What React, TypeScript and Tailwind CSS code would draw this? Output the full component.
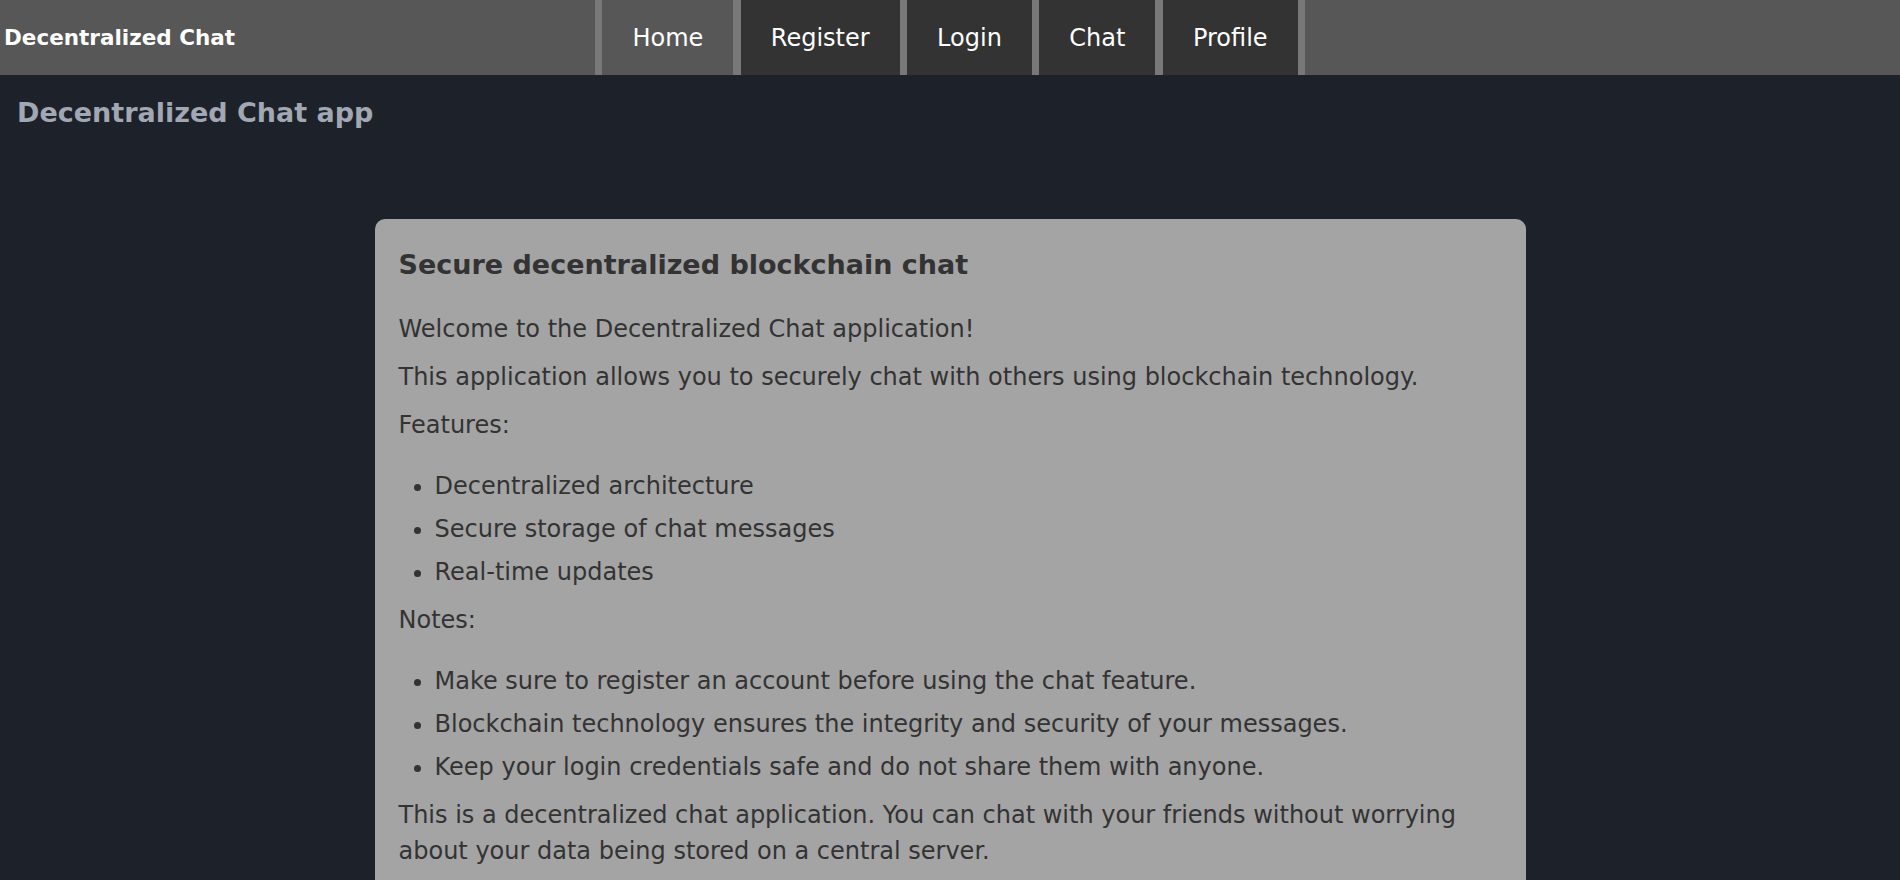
const navItems = ['Home', 'Register', 'Login', 'Chat', 'Profile']

const features = ['Decentralized architecture', 'Secure storage of chat messages', 'Real-time updates']

const notes = [
	'Make sure to register an account before using the chat feature.',
	'Blockchain technology ensures the integrity and security of your messages.',
	'Keep your login credentials safe and do not share them with anyone.',
]

function NavBar() {
	return (
		<nav className="grid h-[75px] grid-cols-[1fr_auto_1fr] bg-[#575757]">
			<div className="flex items-center pt-[2px] pl-[4px] text-[21.5px] font-bold text-white">Decentralized Chat</div>
			<ul className="flex h-full gap-[7.5px] bg-[#787878] px-[7.5px]">
				{navItems.map((item, idx) => (
					<li
						key={item}
						className={`flex h-full items-center px-[30px] pt-[1px] text-[24px] text-white ${
							idx === 0 ? 'bg-[#575757]' : 'bg-[#333333]'
						}`}
					>
						{item}
					</li>
				))}
			</ul>
			<div />
		</nav>
	)
}

function BulletList({ items }: { items: string[] }) {
	return (
		<ul className="mt-[25px] list-disc pl-[36px]">
			{items.map((text, idx) => (
				<li key={text} className={idx === 0 ? '' : 'mt-[7px]'}>
					{text}
				</li>
			))}
		</ul>
	)
}

export default function App() {
	return (
		<div className="min-h-screen bg-[#1d2129] font-['DejaVu_Sans',sans-serif]">
			<NavBar />
			<h2 className="mt-[17.5px] px-[17px] text-[27px] leading-[40.5px] font-bold text-[#a1a7b3]">
				Decentralized Chat app
			</h2>
			<div className="mx-auto mt-[85.5px] w-[1151px] rounded-[10px] bg-[#a4a4a4] px-[24px] pt-[26.5px] pb-[24px] text-[24px] leading-[36px] text-[#333333]">
				<h3 className="text-[27px] leading-[40.5px] font-bold">Secure decentralized blockchain chat</h3>
				<p className="mt-[25px]">Welcome to the Decentralized Chat application!</p>
				<p className="mt-[12px]">
					This application allows you to securely chat with others using blockchain technology.
				</p>
				<p className="mt-[12px]">Features:</p>
				<BulletList items={features} />
				<p className="mt-[12px]">Notes:</p>
				<BulletList items={notes} />
				<p className="mt-[12.5px]">
					This is a decentralized chat application. You can chat with your friends without worrying about
					your data being stored on a central server.
				</p>
			</div>
		</div>
	)
}
